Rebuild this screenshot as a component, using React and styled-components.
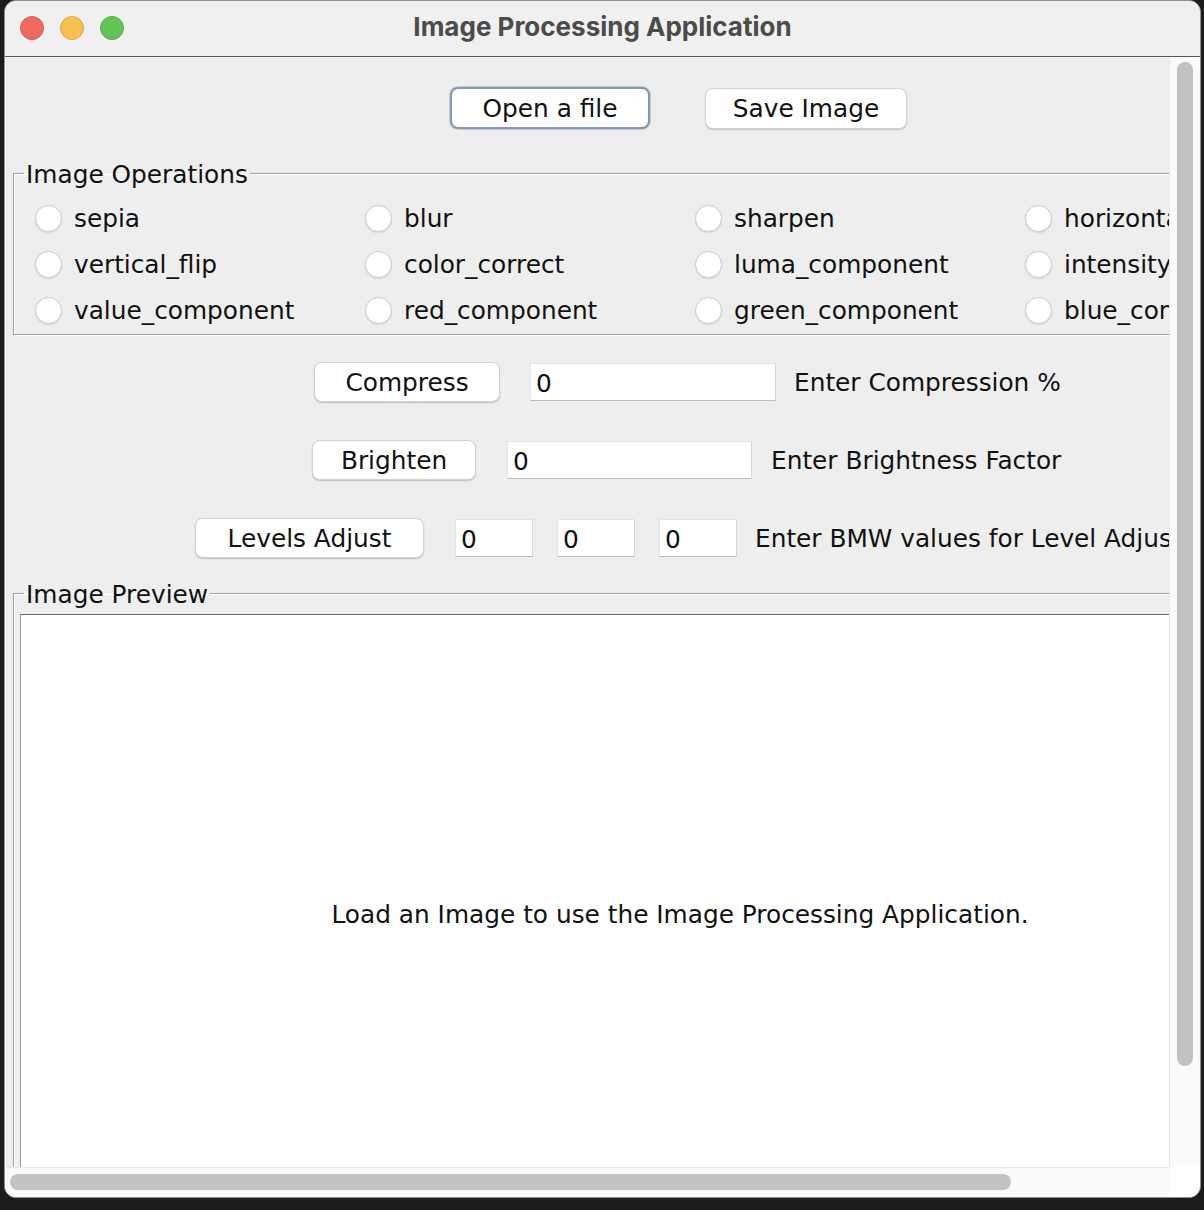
import React from "react";
import styled, { createGlobalStyle, css } from "styled-components";

const GlobalStyle = createGlobalStyle`
  html, body {
    margin: 0;
    padding: 0;
    background: #1c1c1e;
  }
  body {
    font-family: "DejaVu Sans", "Liberation Sans", sans-serif;
  }
`;

const Window = styled.div`
  width: 1197px;
  height: 1198px;
  margin-left: 4px;
  box-sizing: border-box;
  border: 1px solid #8f8f8f;
  border-radius: 12px;
  overflow: hidden;
  background: #eeeeee;
  display: flex;
  flex-direction: column;
`;

const TitleBar = styled.div`
  height: 55px;
  flex: none;
  display: grid;
  grid-template-columns: 1fr auto 1fr;
  align-items: center;
  background: #eff0ef;
  border-bottom: 1px solid #565656;
  padding: 0 15px;
`;

const Lights = styled.div`
  display: flex;
  gap: 16px;
  margin-top: -1px;
`;

const Light = styled.span`
  width: 24px;
  height: 24px;
  box-sizing: border-box;
  border-radius: 50%;
  background: ${(p) => p.$color};
  border: 1px solid ${(p) => p.$edge};
`;

const Title = styled.div`
  font-family: Inter, "Liberation Sans", sans-serif;
  font-weight: 700;
  font-size: 26px;
  line-height: 30px;
  margin-top: -3px;
  color: #4b4b4b;
`;

const Body = styled.div`
  flex: 1;
  min-height: 0;
  display: grid;
  grid-template-columns: 1fr 31px;
  grid-template-rows: 1fr 30px;
  border-left: 1px solid #ffffff;
`;

const Viewport = styled.div`
  overflow: hidden;
  background: #eeeeee;
  min-width: 0;
  min-height: 0;
`;

const Content = styled.div`
  width: 1352px;
  font-size: 24.8px;
  color: #111111;
`;

const Row = styled.div`
  display: flex;
  align-items: center;
  margin-top: ${(p) => p.$top}px;
  padding-left: ${(p) => p.$indent}px;
`;

const Gap = styled.span`
  flex: none;
  width: ${(p) => p.$w}px;
`;

const Button = styled.button`
  width: ${(p) => p.$w}px;
  height: ${(p) => p.$h || 40}px;
  box-sizing: border-box;
  padding: 0;
  background: #ffffff;
  border: 1px solid #d2d2d2;
  border-radius: 8px;
  box-shadow: 0 1px 1.5px rgba(0, 0, 0, 0.2);
  font-family: inherit;
  font-size: 24.8px;
  color: #111111;
  ${(p) =>
    p.$focused &&
    css`
      border: 2px solid #8698b0;
      box-shadow: 0 0 0 1px #c3ccd8;
    `}
`;

const Field = styled.input`
  width: ${(p) => p.$w}px;
  height: 38px;
  box-sizing: border-box;
  padding: 2px 0 0 5px;
  background: #ffffff;
  border: 1px solid #e4e4e4;
  border-bottom-color: #bcbcbc;
  border-right-color: #d6d6d6;
  font-family: inherit;
  font-size: 24.8px;
  color: #111111;
  outline: none;
`;

const Label = styled.span`
  white-space: nowrap;
`;

const Group = styled.fieldset`
  margin: ${(p) => p.$top}px 7px 0;
  padding: 0;
  min-width: 0;
  border: 1px solid #9e9e9e;
  box-shadow: inset 1px 1px 0 #ffffff, 1px 1px 0 #ffffff;
`;

const Legend = styled.legend`
  margin-left: 10px;
  padding: 4px 2px 0;
  font-size: 24.8px;
  line-height: 28px;
  color: #111111;
`;

const RadioGrid = styled.div`
  display: grid;
  grid-template-columns: repeat(4, 330px);
  grid-auto-rows: 46px;
  padding: 6px 0 1px 21px;
`;

const RadioItem = styled.label`
  display: flex;
  align-items: center;
  gap: 12px;
  white-space: nowrap;
`;

const RadioDot = styled.span`
  flex: none;
  width: 27px;
  height: 27px;
  box-sizing: border-box;
  border-radius: 50%;
  background: #ffffff;
  border: 1px solid #cbcbcb;
  box-shadow: 0 1px 1.5px rgba(0, 0, 0, 0.1);
`;

const Preview = styled.div`
  margin: 5px 0 0 6px;
  width: 1319px;
  height: 600px;
  box-sizing: border-box;
  background: #ffffff;
  border-top: 1px solid #6a6a6a;
  border-left: 1px solid #9a9a9a;
  display: flex;
  align-items: center;
  justify-content: center;
`;

const VTrack = styled.div`
  background: #fafafa;
  border-left: 1px solid #e6e6e6;
  padding: 5px 0 0 7px;
`;

const VThumb = styled.div`
  width: 16px;
  height: 1004px;
  border-radius: 8px;
  background: #c2c2c2;
`;

const HTrack = styled.div`
  background: #fafafa;
  border-top: 1px solid #e6e6e6;
  padding: 6px 0 0 4px;
`;

const HThumb = styled.div`
  width: 1001px;
  height: 16px;
  border-radius: 8px;
  background: #c2c2c2;
`;

const Corner = styled.div`
  background: #ffffff;
`;

const operations = [
  "sepia", "blur", "sharpen", "horizontal_flip",
  "vertical_flip", "color_correct", "luma_component", "intensity_component",
  "value_component", "red_component", "green_component", "blue_component",
];

export default function App() {
  return (
    <>
      <GlobalStyle />
      <Window>
        <TitleBar>
          <Lights>
            <Light $color="#ee6a5f" $edge="#d65a4f" />
            <Light $color="#f6bf4f" $edge="#dca640" />
            <Light $color="#61c555" $edge="#50ab45" />
          </Lights>
          <Title>Image Processing Application</Title>
          <span />
        </TitleBar>
        <Body>
          <Viewport>
            <Content>
              <Row $top={30} $indent={444}>
                <Button $w={200} $h={42} $focused>Open a file</Button>
                <Gap $w={55} />
                <Button $w={202} $h={41}>Save Image</Button>
              </Row>

              <Group $top={28}>
                <Legend>Image Operations</Legend>
                <RadioGrid>
                  {operations.map((op) => (
                    <RadioItem key={op}>
                      <RadioDot />
                      {op}
                    </RadioItem>
                  ))}
                </RadioGrid>
              </Group>

              <Row $top={27} $indent={308}>
                <Button $w={186}>Compress</Button>
                <Gap $w={30} />
                <Field $w={246} defaultValue="0" />
                <Gap $w={18} />
                <Label>Enter Compression %</Label>
              </Row>

              <Row $top={38} $indent={306}>
                <Button $w={164}>Brighten</Button>
                <Gap $w={31} />
                <Field $w={245} defaultValue="0" />
                <Gap $w={19} />
                <Label>Enter Brightness Factor</Label>
              </Row>

              <Row $top={38} $indent={189}>
                <Button $w={229}>Levels Adjust</Button>
                <Gap $w={31} />
                <Field $w={78} defaultValue="0" />
                <Gap $w={24} />
                <Field $w={78} defaultValue="0" />
                <Gap $w={24} />
                <Field $w={78} defaultValue="0" />
                <Gap $w={18} />
                <Label>Enter BMW values for Level Adjustment</Label>
              </Row>

              <Group $top={19}>
                <Legend>Image Preview</Legend>
                <Preview>Load an Image to use the Image Processing Application.</Preview>
              </Group>
            </Content>
          </Viewport>
          <VTrack>
            <VThumb />
          </VTrack>
          <HTrack>
            <HThumb />
          </HTrack>
          <Corner />
        </Body>
      </Window>
    </>
  );
}
